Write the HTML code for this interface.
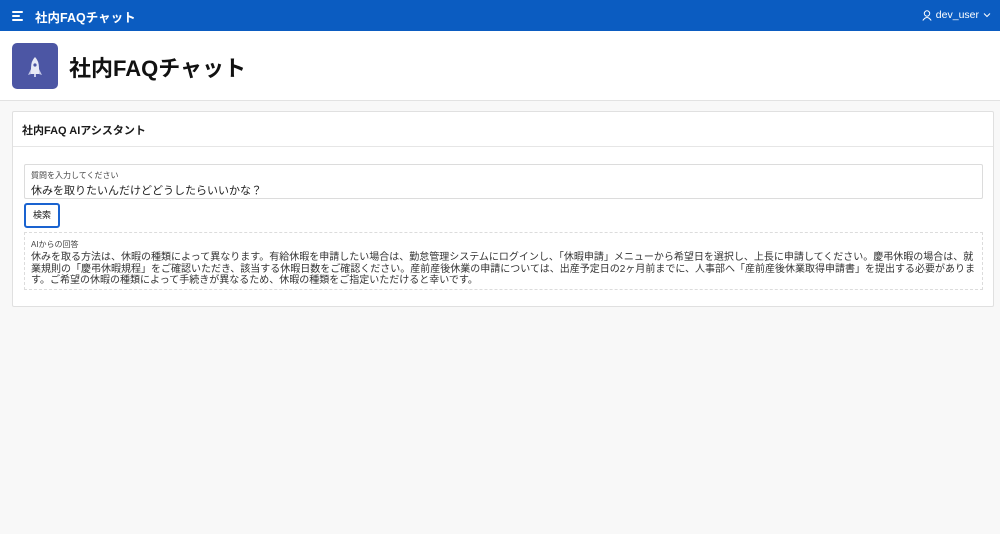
<!DOCTYPE html>
<html><head><meta charset="utf-8"><style>
*{margin:0;padding:0;box-sizing:border-box}
body{width:1000px;height:534px;overflow:hidden;background:#f8f8f8;font-family:"Liberation Sans","Noto Sans CJK JP",sans-serif;color:#1a1a1a;position:relative}
.top{position:absolute;left:0;top:0;width:1000px;height:31px;background:#0b5cc1;color:#fff}
.ham{position:absolute;left:12px;top:11px}
.ham i{display:block;height:2px;background:#fff;margin-bottom:2px;border-radius:1px}
.ttl{position:absolute;left:35px;top:7px;font-size:12.5px;font-weight:bold}
.user{position:absolute;right:9px;top:9px;font-size:10.5px;display:flex;align-items:center;gap:4px}
.ph{position:absolute;left:0;top:31px;width:1000px;height:70px;background:#fff;border-bottom:1px solid #e2e2e2}
.ico{position:absolute;left:12px;top:12px;width:46px;height:46px;border-radius:5px;background:#4c56a4}
.ph h1{position:absolute;left:69px;top:20px;font-size:22px;font-weight:bold;color:#111}
.card{position:absolute;left:12px;top:111px;width:982px;height:196px;background:#fff;border:1px solid #e0e0e0;border-radius:2px}
.ch{height:35px;border-bottom:1px solid #e6e6e6;font-size:11px;font-weight:bold;padding:10px 0 0 9px}
.inp{position:absolute;left:11px;top:52px;width:959px;height:35px;border:1px solid #dcdcdc;border-radius:2px}
.lbl{font-size:8px;color:#444;position:absolute;left:6px;top:5px}
.val{font-size:11px;position:absolute;left:6px;top:17px;color:#222}
.btn{position:absolute;left:11px;top:91px;width:36px;height:25px;border:2px solid #1a63d0;border-radius:3px;font-size:9px;text-align:center;line-height:21px;background:#fff}
.ans{position:absolute;left:11px;top:120px;width:959px;height:58px;border:1px dashed #dcdcdc}
.ans .lbl{top:6px}
.txt{position:absolute;left:6px;top:19px;font-size:10px;line-height:11.6px;color:#333;white-space:nowrap;letter-spacing:0}
</style></head><body>
<div class="top">
<div class="ham"><i style="width:11px"></i><i style="width:8px"></i><i style="width:11px"></i></div>
<div class="ttl">社内FAQチャット</div>
<div class="user"><svg width="10" height="11" viewBox="0 0 10 11"><circle cx="5" cy="3.5" r="2.7" fill="none" stroke="#fff" stroke-width="1"/><path d="M0.8 10.5 Q5 4.5 9.2 10.5" fill="none" stroke="#fff" stroke-width="1"/></svg><span>dev_user</span><svg width="8" height="6" viewBox="0 0 8 6"><path d="M1 1.5 L4 4.5 L7 1.5" fill="none" stroke="#fff" stroke-width="1"/></svg></div>
</div>
<div class="ph"><div class="ico"><svg width="46" height="46" viewBox="0 0 46 46"><path d="M23 14 Q27 18 27 25 L27 31 L19 31 L19 25 Q19 18 23 14Z" fill="#e8eaf6"/><path d="M19 26 L16 32 L19 31Z M27 26 L30 32 L27 31Z" fill="#c5c9e8"/><circle cx="23" cy="22" r="1.6" fill="#4c56a4"/><rect x="22" y="31" width="2" height="3" fill="#c5c9e8"/></svg></div><h1>社内FAQチャット</h1></div>
<div class="card">
<div class="ch">社内FAQ AIアシスタント</div>
<div class="inp"><div class="lbl">質問を入力してください</div><div class="val">休みを取りたいんだけどどうしたらいいかな？</div></div>
<div class="btn">検索</div>
<div class="ans"><div class="lbl">AIからの回答</div><div class="txt">休みを取る方法は、休暇の種類によって異なります。有給休暇を申請したい場合は、勤怠管理システムにログインし、「休暇申請」メニューから希望日を選択し、上長に申請してください。慶弔休暇の場合は、就<br>業規則の「慶弔休暇規程」をご確認いただき、該当する休暇日数をご確認ください。産前産後休業の申請については、出産予定日の2ヶ月前までに、人事部へ「産前産後休業取得申請書」を提出する必要がありま<br>す。ご希望の休暇の種類によって手続きが異なるため、休暇の種類をご指定いただけると幸いです。</div></div>
</div>
</body></html>
